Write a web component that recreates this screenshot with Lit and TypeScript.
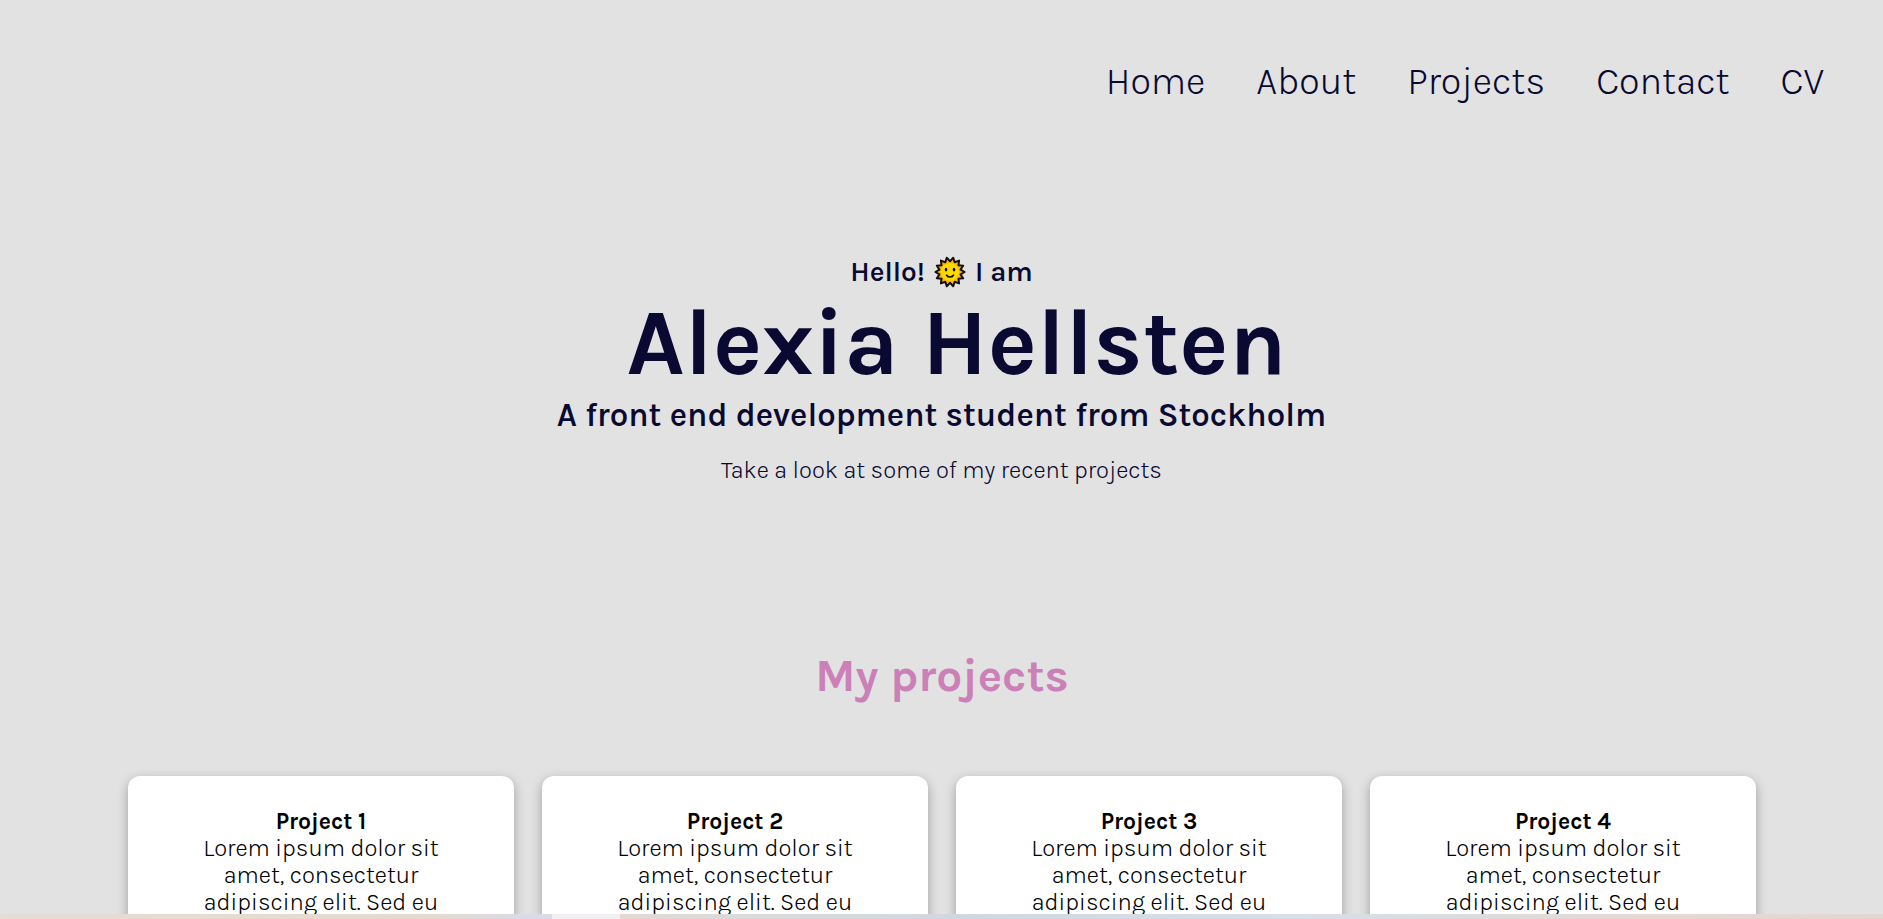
import { LitElement, html, css, svg } from "lit";
import { customElement } from "lit/decorators.js";

const LINKS = ["Home", "About", "Projects", "Contact", "CV"];
const PROJECTS = ["Project 1", "Project 2", "Project 3", "Project 4"];

const sunRays = (() => {
  const points: string[] = [];
  const spikes = 14;
  for (let i = 0; i < spikes * 2; i++) {
    const r = i % 2 ? 10.8 : 14.6;
    const a = (Math.PI * (i + 1)) / spikes;
    points.push(`${(16 + r * Math.sin(a)).toFixed(2)},${(16 - r * Math.cos(a)).toFixed(2)}`);
  }
  return points.join(" ");
})();

@customElement("sun-icon")
export class SunIcon extends LitElement {
  static styles = css`
    :host {
      display: inline-flex;
      width: 32px;
      height: 32px;
    }
  `;
  render() {
    return html`<svg viewBox="0 0 32 32" width="32" height="32" role="img" aria-label="Sun">
      ${svg`
        <polygon points=${sunRays} fill="#ffb900" stroke="#111" stroke-width="2" stroke-linejoin="round" />
        <circle cx="16" cy="16" r="9" fill="#ffd800" />
        <ellipse cx="12" cy="13.6" rx="1.3" ry="1.9" fill="#111" />
        <ellipse cx="20" cy="13.6" rx="1.3" ry="1.9" fill="#111" />
        <path d="M12.6 19.2c1.6 2.4 5.2 2.4 6.8 0" fill="none" stroke="#111" stroke-width="1.7" stroke-linecap="round" />
      `}
    </svg>`;
  }
}

@customElement("project-card")
export class ProjectCard extends LitElement {
  static properties = { heading: { type: String } };
  declare heading: string;

  static styles = css`
    :host {
      display: block;
      padding: 32px 64px;
      border-radius: 12px;
      background: #fff;
      color: #000;
      box-shadow: 0 4px 12px rgba(0, 0, 0, 0.3);
      line-height: 27px;
      text-align: center;
    }
    .title {
      margin: 0;
      font-size: 23px;
      font-weight: 700;
    }
    .text {
      margin: 0;
      font-size: 24px;
      font-weight: 300;
    }
  `;
  render() {
    return html`
      <h3 class="title">${this.heading}</h3>
      <p class="text">Lorem ipsum dolor sit amet, consectetur adipiscing elit. Sed eu</p>
    `;
  }
}

@customElement("app-root")
export class AppRoot extends LitElement {
  static styles = css`
    :host {
      display: flex;
      flex-direction: column;
      height: 100vh;
      background: #e2e2e2;
      color: #090931;
      font-family: Karla, Inter, sans-serif;
    }
    .page {
      flex: 1;
      min-height: 0;
      overflow: hidden;
    }
    .nav {
      display: flex;
      justify-content: flex-end;
      gap: 51px;
      padding: 60px 59px 0;
    }
    .link {
      color: inherit;
      font-size: 38px;
      font-weight: 300;
      line-height: 43px;
      text-decoration: none;
    }
    .hero {
      display: flex;
      flex-direction: column;
      align-items: center;
      padding-top: 151px;
      text-align: center;
    }
    .hello {
      display: flex;
      align-items: center;
      gap: 9px;
      margin: 0;
      font-size: 28px;
      font-weight: 600;
      line-height: 36px;
    }
    .name {
      margin: 0;
      padding-left: 30px;
      font-size: 93px;
      font-weight: 700;
      line-height: 106px;
    }
    .role {
      margin: 0;
      font-size: 33px;
      font-weight: 600;
      line-height: 39px;
    }
    .lead {
      margin: 20px 0 0;
      font-size: 24px;
      font-weight: 300;
      line-height: 30px;
    }
    .projects {
      padding: 163px 127px 0 128px;
    }
    .heading {
      margin: 0;
      color: #cb80b8;
      font-size: 46px;
      font-weight: 700;
      line-height: 56px;
      text-align: center;
    }
    .cards {
      display: grid;
      grid-template-columns: repeat(4, 1fr);
      gap: 28px;
      padding-top: 72px;
    }
    .strip {
      flex: none;
      display: grid;
      grid-template-columns: 552fr 68fr 1263fr;
      height: 5px;
    }
    .left {
      background: linear-gradient(90deg, #e4dcd6, #e8dbd0 30%, #e6dacf 78%, #dadae8 95%);
    }
    .tab {
      background: #f2f0f3;
    }
    .right {
      background: linear-gradient(90deg, #e5d8d2, #dcdad9 8%, #cfd7e1 27%, #d6dfe9 52%, #dcdcde 68%, #e7d8d2 80%, #e3d5d0);
    }
  `;
  render() {
    return html`
      <div class="page">
        <nav class="nav">
          ${LINKS.map((l) => html`<a class="link" href="#${l.toLowerCase()}">${l}</a>`)}
        </nav>
        <header class="hero">
          <p class="hello"><span>Hello!</span><sun-icon></sun-icon><span>I am</span></p>
          <h1 class="name">Alexia Hellsten</h1>
          <p class="role">A front end development student from Stockholm</p>
          <p class="lead">Take a look at some of my recent projects</p>
        </header>
        <section class="projects" id="projects">
          <h2 class="heading">My projects</h2>
          <div class="cards">
            ${PROJECTS.map((p) => html`<project-card .heading=${p}></project-card>`)}
          </div>
        </section>
      </div>
      <div class="strip"><div class="left"></div><div class="tab"></div><div class="right"></div></div>
    `;
  }
}
